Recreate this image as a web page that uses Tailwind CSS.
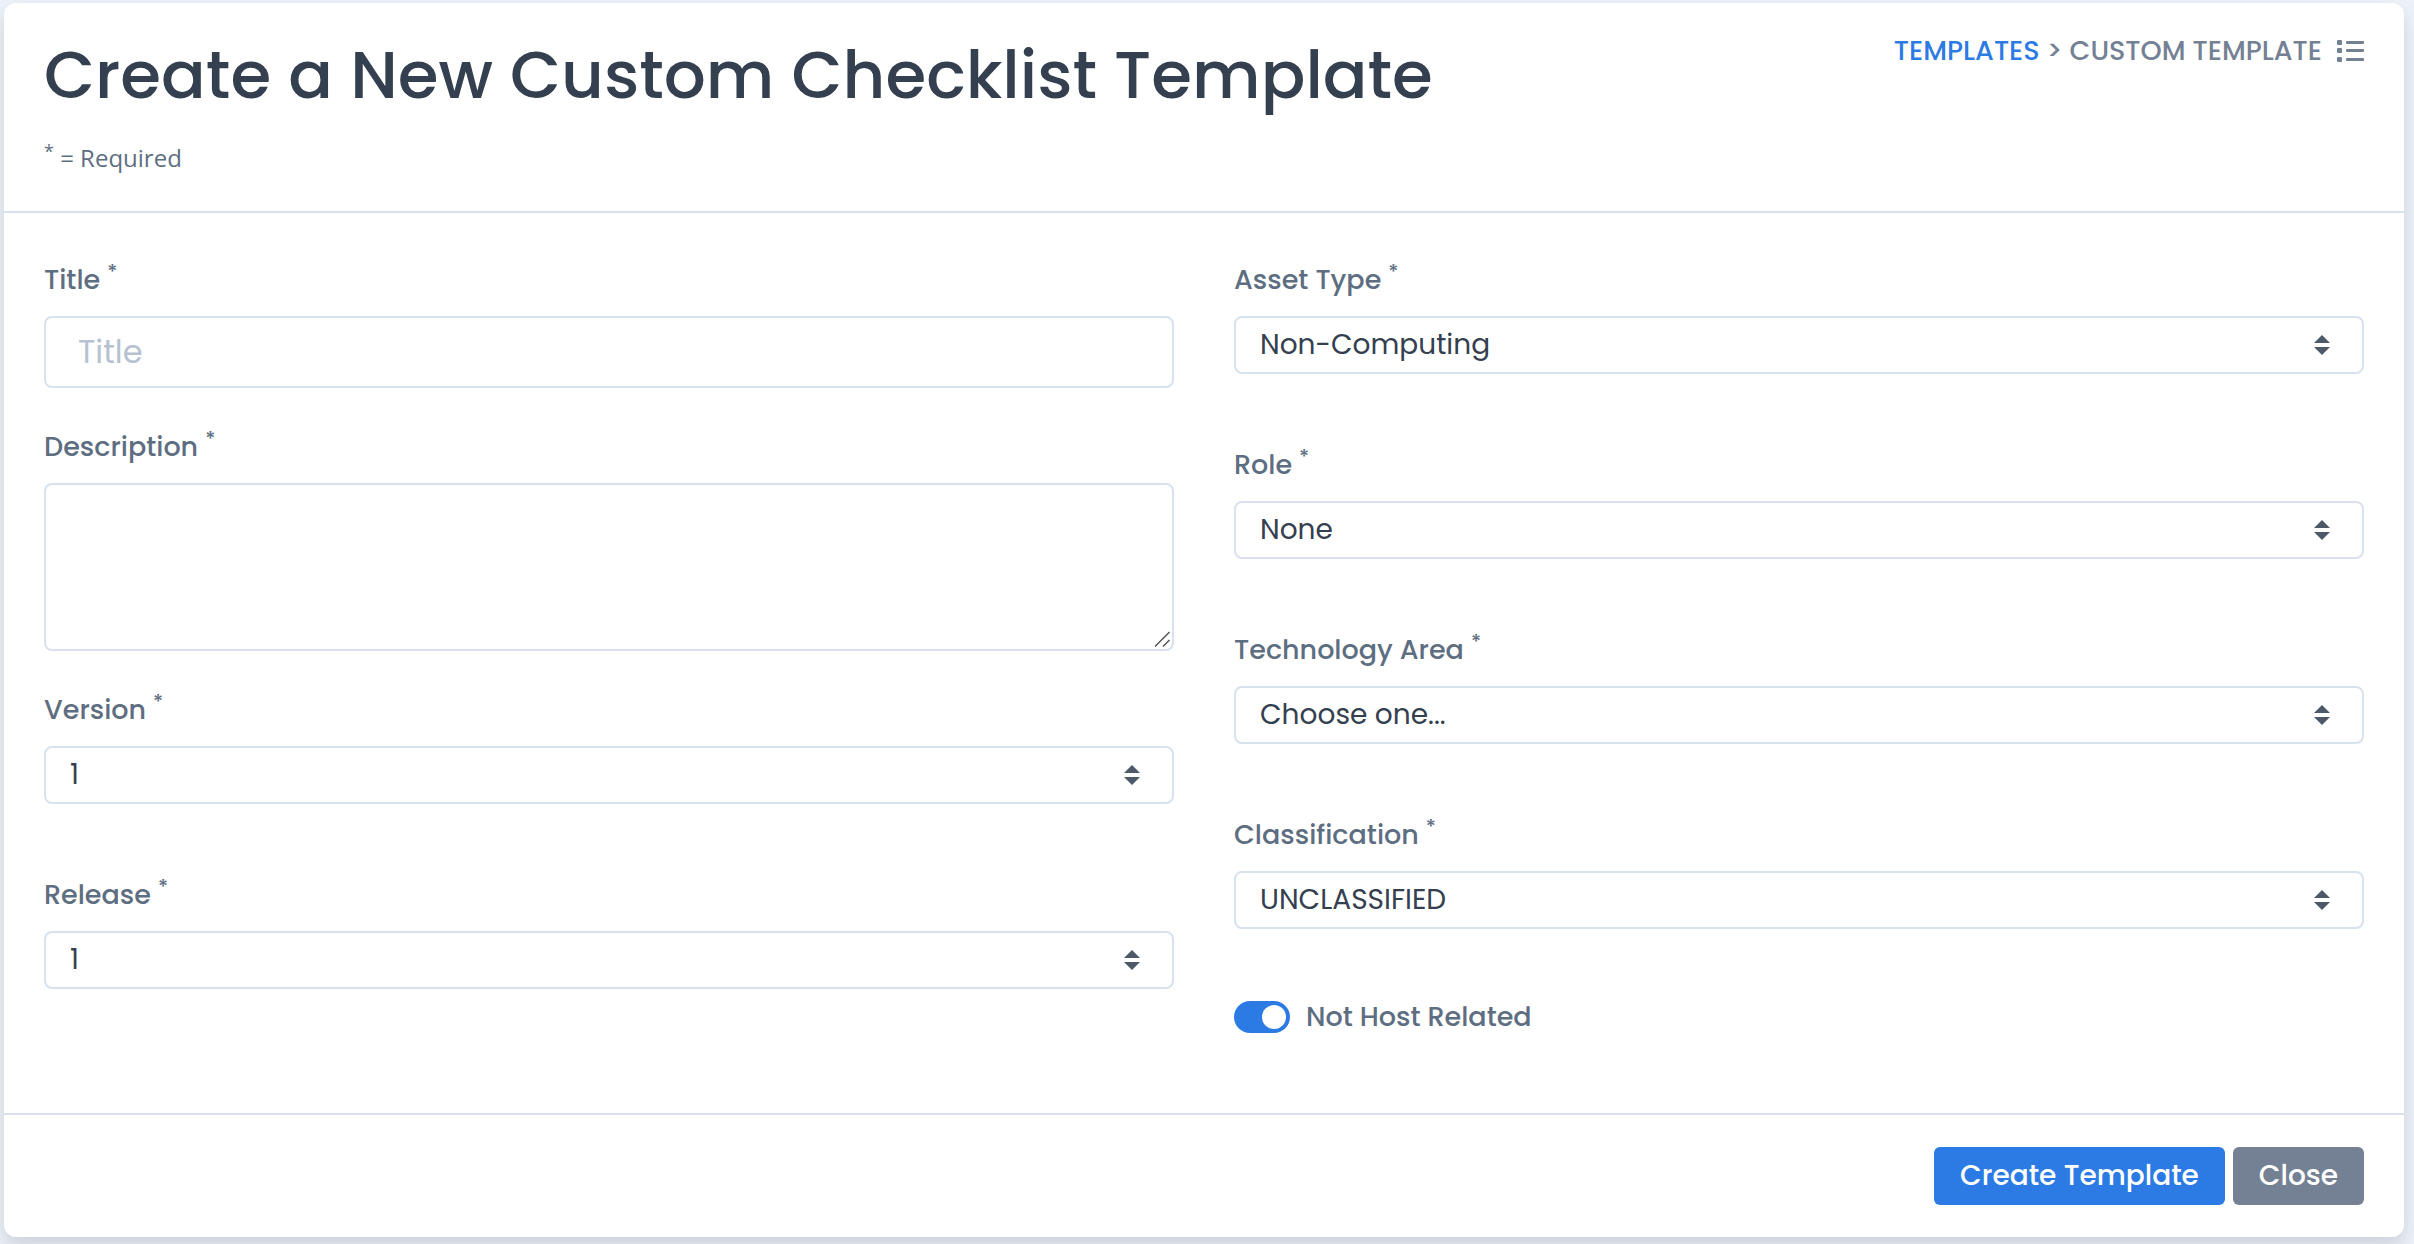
<!DOCTYPE html>
<html lang="en">
<head>
    <meta charset="UTF-8">
    <meta name="viewport" content="width=device-width, initial-scale=1.0">
    <title>Create a New Custom Checklist Template</title>
    <script src="https://cdn.jsdelivr.net/npm/@tailwindcss/browser@4"></script>
</head>
<body class="bg-[#edf2f9] font-[Poppins,Inter,sans-serif] text-[#5e6e82] pt-[3px] pr-[10px] pb-[7px] pl-1">
    <form class="bg-white rounded-xl shadow-[0_14px_28px_rgba(65,69,88,0.1),0_6px_12px_rgba(0,0,0,0.07)]">

        <!-- Header -->
        <header class="flex justify-between items-start gap-10 px-10 pt-8 pb-[35px] border-b-2 border-[#d8e2ef]">
            <div>
                <h1 class="text-[66px] leading-[80px] font-medium text-[#344050]">Create a New Custom Checklist Template</h1>
                <p class="mt-[25px] text-2xl leading-9 font-[Open_Sans,sans-serif]"><sup>*</sup> = Required</p>
            </div>
            <nav aria-label="Breadcrumb" class="flex items-center shrink-0 text-[27px] leading-8 font-medium text-[#748194]">
                <a href="#" class="text-[#2c7be5]">TEMPLATES</a>
                <span class="px-[7px]">&gt;</span>
                <span>CUSTOM TEMPLATE</span>
                <svg class="ml-[14px] w-7 h-6" viewBox="0 0 28 24" fill="currentColor" aria-hidden="true">
                    <rect x="1" y="1" width="5" height="5" rx="1"/>
                    <rect x="1" y="9" width="5" height="5" rx="1"/>
                    <rect x="1" y="18" width="5" height="5" rx="1"/>
                    <rect x="10" y="2" width="18" height="3" rx="1"/>
                    <rect x="10" y="10" width="18" height="3" rx="1"/>
                    <rect x="10" y="19" width="18" height="3" rx="1"/>
                </svg>
            </nav>
        </header>

        <!-- Form fields -->
        <div class="grid grid-cols-2 gap-[60px] px-10 pt-10 pb-[72px]">
            <div>
                <div class="mb-8">
                    <label for="title" class="block mb-[9px] text-[27px] leading-[54px] font-medium">Title <sup>*</sup></label>
                    <input type="text" id="title" placeholder="Title" class="block w-full h-[72px] px-8 border-2 border-[#d8e2ef] rounded-lg text-[32px] text-[#344050] placeholder:text-[#b6c1d2]">
                </div>
                <div class="mb-8">
                    <label for="description" class="block mb-[9px] text-[27px] leading-[54px] font-medium">Description <sup>*</sup></label>
                    <div class="relative">
                        <textarea id="description" class="block w-full h-[168px] px-6 py-2 border-2 border-[#d8e2ef] rounded-lg text-[28px] text-[#344050] resize-none"></textarea>
                        <svg class="absolute right-1 bottom-1 w-4 h-4 pointer-events-none" viewBox="0 0 16 16" fill="none" stroke="#555" stroke-width="1.5" aria-hidden="true">
                            <path d="M1 15.500L15.500 1M9 15.500L15.500 9"/>
                        </svg>
                    </div>
                </div>
                <div class="mb-16">
                    <label for="version" class="block mb-[9px] text-[27px] leading-[54px] font-medium">Version <sup>*</sup></label>
                    <div class="relative">
                        <select id="version" class="block w-full h-[58px] px-6 border-2 border-[#d8e2ef] rounded-lg bg-white text-[28px] text-[#344050] appearance-none">
                            <option>1</option>
                        </select>
                        <svg class="absolute right-[34px] top-[19px] w-4 h-5 pointer-events-none" viewBox="0 0 16 20" fill="#4d5969" aria-hidden="true"><path d="M8 0l8 8H0zM8 20l8-8H0z"/></svg>
                    </div>
                </div>
                <div>
                    <label for="release" class="block mb-[9px] text-[27px] leading-[54px] font-medium">Release <sup>*</sup></label>
                    <div class="relative">
                        <select id="release" class="block w-full h-[58px] px-6 border-2 border-[#d8e2ef] rounded-lg bg-white text-[28px] text-[#344050] appearance-none">
                            <option>1</option>
                        </select>
                        <svg class="absolute right-[34px] top-[19px] w-4 h-5 pointer-events-none" viewBox="0 0 16 20" fill="#4d5969" aria-hidden="true"><path d="M8 0l8 8H0zM8 20l8-8H0z"/></svg>
                    </div>
                </div>
            </div>

            <div>
                <div class="mb-16">
                    <label for="asset-type" class="block mb-[9px] text-[27px] leading-[54px] font-medium">Asset Type <sup>*</sup></label>
                    <div class="relative">
                        <select id="asset-type" class="block w-full h-[58px] px-6 border-2 border-[#d8e2ef] rounded-lg bg-white text-[28px] text-[#344050] appearance-none">
                            <option>Non-Computing</option>
                        </select>
                        <svg class="absolute right-[34px] top-[19px] w-4 h-5 pointer-events-none" viewBox="0 0 16 20" fill="#4d5969" aria-hidden="true"><path d="M8 0l8 8H0zM8 20l8-8H0z"/></svg>
                    </div>
                </div>
                <div class="mb-16">
                    <label for="role" class="block mb-[9px] text-[27px] leading-[54px] font-medium">Role <sup>*</sup></label>
                    <div class="relative">
                        <select id="role" class="block w-full h-[58px] px-6 border-2 border-[#d8e2ef] rounded-lg bg-white text-[28px] text-[#344050] appearance-none">
                            <option>None</option>
                        </select>
                        <svg class="absolute right-[34px] top-[19px] w-4 h-5 pointer-events-none" viewBox="0 0 16 20" fill="#4d5969" aria-hidden="true"><path d="M8 0l8 8H0zM8 20l8-8H0z"/></svg>
                    </div>
                </div>
                <div class="mb-16">
                    <label for="technology-area" class="block mb-[9px] text-[27px] leading-[54px] font-medium">Technology Area <sup>*</sup></label>
                    <div class="relative">
                        <select id="technology-area" class="block w-full h-[58px] px-6 border-2 border-[#d8e2ef] rounded-lg bg-white text-[28px] text-[#344050] appearance-none">
                            <option>Choose one...</option>
                        </select>
                        <svg class="absolute right-[34px] top-[19px] w-4 h-5 pointer-events-none" viewBox="0 0 16 20" fill="#4d5969" aria-hidden="true"><path d="M8 0l8 8H0zM8 20l8-8H0z"/></svg>
                    </div>
                </div>
                <div class="mb-16">
                    <label for="classification" class="block mb-[9px] text-[27px] leading-[54px] font-medium">Classification <sup>*</sup></label>
                    <div class="relative">
                        <select id="classification" class="block w-full h-[58px] px-6 border-2 border-[#d8e2ef] rounded-lg bg-white text-[28px] text-[#344050] appearance-none">
                            <option>UNCLASSIFIED</option>
                        </select>
                        <svg class="absolute right-[34px] top-[19px] w-4 h-5 pointer-events-none" viewBox="0 0 16 20" fill="#4d5969" aria-hidden="true"><path d="M8 0l8 8H0zM8 20l8-8H0z"/></svg>
                    </div>
                </div>
                <div class="flex items-center gap-4">
                    <input type="checkbox" role="switch" id="not-host" checked class="appearance-none flex items-center w-14 h-8 px-1 rounded-full bg-[#b6c1d2] checked:bg-[#2c7be5] checked:justify-end before:block before:w-6 before:h-6 before:rounded-full before:bg-white">
                    <label for="not-host" class="text-[27px] leading-[48px] font-medium">Not Host Related</label>
                </div>
            </div>
        </div>

        <!-- Actions -->
        <footer class="flex justify-end gap-2 px-10 py-8 border-t-2 border-[#d8e2ef]">
            <button type="submit" class="h-[58px] px-[26px] rounded-md bg-[#2c7be5] text-[28px] font-medium text-white">Create Template</button>
            <button type="button" class="h-[58px] px-[26px] rounded-md bg-[#748194] text-[28px] font-medium text-white">Close</button>
        </footer>
    </form>
</body>
</html>
